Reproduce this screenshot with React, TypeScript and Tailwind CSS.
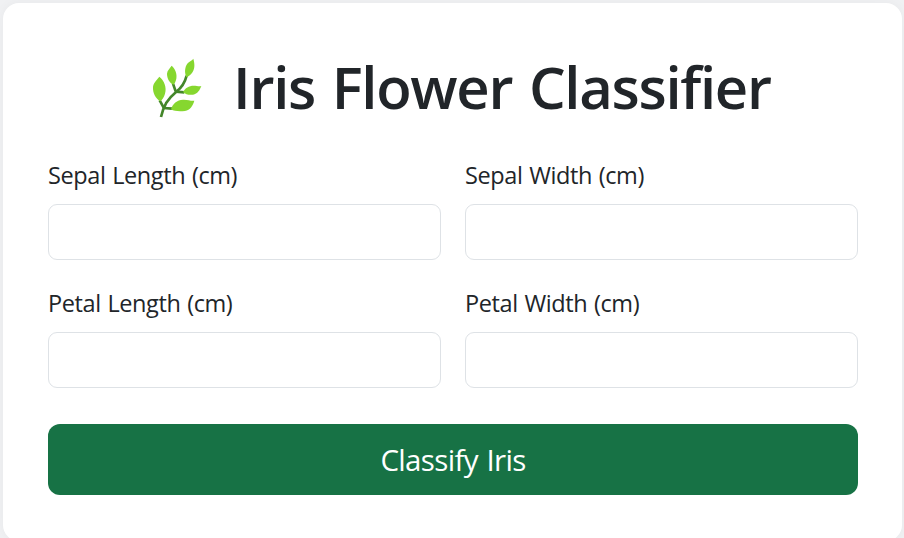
function Sprig() {
  return (
    <svg viewBox="36 24 150 180" className="h-[60px] w-[50px] shrink-0" fill="none" aria-hidden="true">
      <g stroke="#43862a" strokeWidth="8">
        <path d="M63 201Q68 178 79 158Q92 139 109 125Q132 108 140 77" />
        <path d="M71 173L59 151" />
        <path d="M71 174L96 176" />
        <path d="M107 124L99 101" />
        <path d="M108 125L133 127" />
      </g>
      <g fill="#86d72f">
        <path d="M58 80C72 91 81 112 75 131C72 142 67 149 61 154C47 146 38 130 39 111C40 99 50 90 58 80Z" />
        <path d="M95 47C106 57 112 72 109 86C107 95 104 100 100 104C89 99 81 86 81 71C82 60 90 55 95 47Z" />
        <path d="M160 26C165 44 165 59 154 71C149 77 144 80 139 81C133 69 134 51 143 40C149 33 156 32 160 26Z" />
        <path d="M129 126C135 114 147 107 161 107C170 107 177 110 184 108C179 121 173 131 159 134C147 136 137 133 129 126Z" />
        <path d="M93 178C98 161 111 150 129 149C143 148 153 154 163 152C158 168 151 180 135 183C118 185 103 184 93 178Z" />
      </g>
    </svg>
  );
}

function Field({ id, label }: { id: string; label: string }) {
  return (
    <div className="flex flex-col">
      <label
        htmlFor={id}
        className="mb-[10px] flex h-9 items-center whitespace-nowrap text-[23.5px] tracking-[-0.4px] [word-spacing:1px]"
      >
        {label}
      </label>
      <input id={id} type="text" className="h-14 w-full rounded-[9px] border border-[#dee2e6] bg-white px-4 outline-none" />
    </div>
  );
}

export default function App() {
  return (
    <main className="h-[538px] overflow-hidden bg-[#f0f1f3] pl-[3px] pr-[2px] pt-[3px] font-['Open_Sans','Noto_Sans',sans-serif] text-[#212529]">
      <section className="h-[538px] rounded-[16px] bg-white pl-[45px] pr-[44px] pt-[49px] shadow-[0_0_12px_rgba(0,0,0,0.04)]">
        <h1 className="flex h-[72px] items-center pl-[104px] text-[58px] font-semibold leading-[72px]">
          <Sprig />
          <span className="ml-[31px] whitespace-nowrap pb-[2px] leading-[70px] tracking-[-1.3px] [word-spacing:3px]">
            Iris Flower Classifier
          </span>
        </h1>
        <form>
          <div className="mt-[34px] grid grid-cols-2 gap-x-6 gap-y-[26px]">
            <Field id="sepal-length" label="Sepal Length (cm)" />
            <Field id="sepal-width" label="Sepal Width (cm)" />
            <Field id="petal-length" label="Petal Length (cm)" />
            <Field id="petal-width" label="Petal Width (cm)" />
          </div>
          <button
            type="button"
            className="mt-9 flex h-[71px] w-full items-center justify-center rounded-[12px] bg-[#177245] pt-[2px] text-[29.5px] tracking-[-0.65px] text-white [word-spacing:1.5px]"
          >
            Classify Iris
          </button>
        </form>
      </section>
    </main>
  );
}
